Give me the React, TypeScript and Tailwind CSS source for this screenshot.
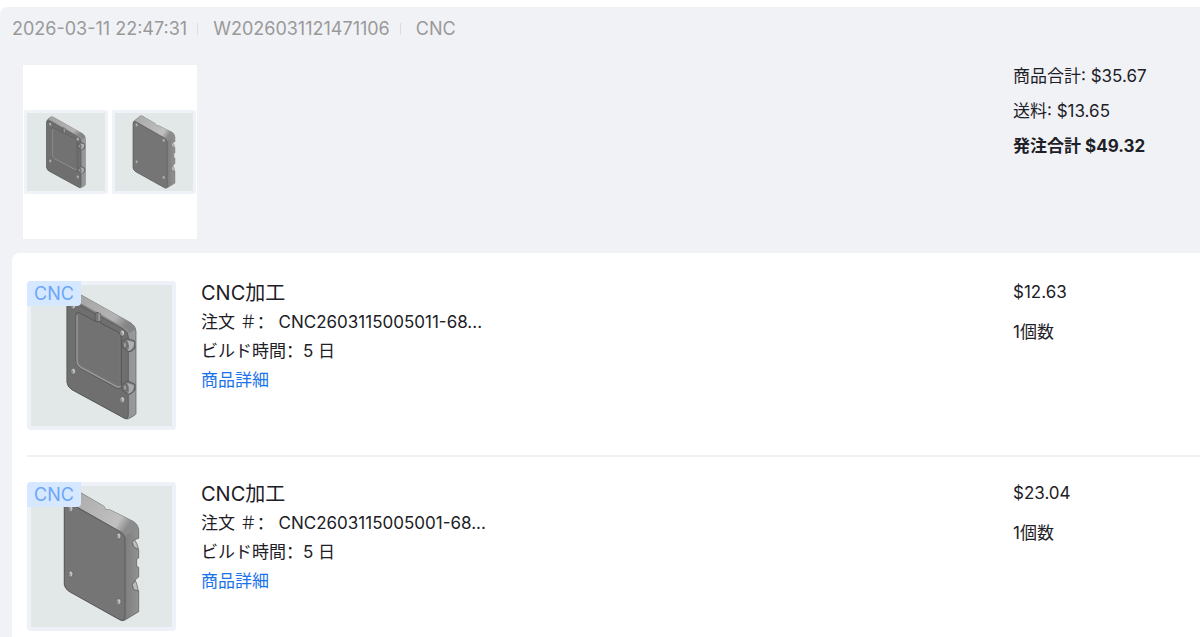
type Part = 'pocket' | 'cover';

type OrderItem = {
  id: string;
  part: Part;
  orderNumber: string;
  price: string;
};

const items: OrderItem[] = [
  { id: 'a', part: 'pocket', orderNumber: 'CNC2603115005011-68...', price: '$12.63' },
  { id: 'b', part: 'cover', orderNumber: 'CNC2603115005001-68...', price: '$23.04' },
];

function Hole({ x, y }: { x: number; y: number }) {
  return (
    <g>
      <ellipse cx={x} cy={y} rx="7" ry="9" fill="#c4c4c4" stroke="#555" strokeWidth="2" />
      <path d={`M${x - 5} ${y - 6}Q${x + 1} ${y - 2} ${x + 1} ${y + 8}Q${x - 8} ${y + 4} ${x - 5} ${y - 6}Z`} fill="#8a8a8a" />
    </g>
  );
}

function PocketPlate({ className }: { className: string }) {
  return (
    <svg viewBox="21 30 447 447" className={className} role="img" aria-label="CNC部品 1">
      <defs>
        <linearGradient id="pocketSide" x1="0" y1="0" x2="1" y2="0">
          <stop offset="0" stopColor="#6c6c6c" />
          <stop offset="1" stopColor="#9a9a9a" />
        </linearGradient>
        <linearGradient id="pocketTop" x1="0" y1="0" x2="1" y2="0.5">
          <stop offset="0" stopColor="#a2a2a2" />
          <stop offset="0.8" stopColor="#b4b4b4" />
          <stop offset="1" stopColor="#858585" />
        </linearGradient>
      </defs>
      <path d="M141 91Q143 82 151 77L163 67Q169 63 178 69L333 156Q347 165 348 180V427Q347 431 342 434L326 443Q319 446 312 441L156 356Q142 347 141 334Z" fill="url(#pocketSide)" stroke="#5a5a5a" strokeWidth="2" />
      <path d="M146 88L163 67Q169 63 178 69L333 156Q345 164 347 176L327 187Q325 176 314 170L163 86Q152 80 146 88Z" fill="url(#pocketTop)" />
      <path d="M141 101Q141 83 156 91L311 174Q325 183 325 198V431Q324 447 312 441L156 356Q142 347 141 334Z" fill="#6f6f6f" stroke="#505050" strokeWidth="2" />
      <path d="M168 134Q168 119 181 127L226 151Q233 154 240 150L244 158L288 180Q304 188 304 205V342Q303 359 288 350L184 293Q168 283 168 268Z" fill="#747474" stroke="#484848" strokeWidth="2" />
      <path d="M171 132V268Q171 282 184 290L290 347Q299 351 302 344" fill="none" stroke="#9c9c9c" strokeWidth="4" />
      <path d="M178 136V266Q178 275 190 283L297 340V207Q297 192 284 185L192 137Q180 130 178 136Z" fill="#727272" />
      <path d="M225 128Q228 122 235 125L242 129V151Q233 156 225 149Z" fill="#777" stroke="#4c4c4c" strokeWidth="2" />
      <path d="M235 126L241 130V149L235 151Z" fill="#9c9c9c" />
      <path d="M304 212L323 203Q331 204 344 210L345 232Q334 245 324 242L306 228Z" fill="#777" stroke="#4c4c4c" strokeWidth="2" />
      <path d="M321 208L342 213Q343 230 331 238L322 240Q333 228 321 208Z" fill="#b0b0b0" />
      <ellipse cx="315" cy="222" rx="6" ry="9" fill="#999" stroke="#4c4c4c" strokeWidth="2" />
      <path d="M304 342L323 331Q334 332 345 340V357Q334 372 324 370L306 358Z" fill="#777" stroke="#4c4c4c" strokeWidth="2" />
      <path d="M321 335L342 343Q342 358 331 366L322 369Q333 357 321 335Z" fill="#aaa" />
      <ellipse cx="315" cy="350" rx="6" ry="9" fill="#999" stroke="#4c4c4c" strokeWidth="2" />
      <Hole x={160} y={105} />
      <Hole x={307} y={186} />
      <Hole x={160} y={301} />
      <Hole x={307} y={386} />
    </svg>
  );
}

function CoverPlate({ className }: { className: string }) {
  return (
    <svg viewBox="21 35 447 447" className={className} role="img" aria-label="CNC部品 2">
      <defs>
        <linearGradient id="coverSide" x1="0" y1="0" x2="1" y2="0">
          <stop offset="0" stopColor="#686868" />
          <stop offset="0.8" stopColor="#7c7c7c" />
          <stop offset="1" stopColor="#929292" />
        </linearGradient>
        <linearGradient id="coverTop" x1="0" y1="0" x2="1" y2="0.4">
          <stop offset="0" stopColor="#a8a8a8" />
          <stop offset="0.85" stopColor="#c0c0c0" />
          <stop offset="1" stopColor="#8c8c8c" />
        </linearGradient>
      </defs>
      <path d="M133 105Q134 95 143 90L174 65L182 67L252 108L257 118L271 119L341 154Q355 163 356 180V204L343 208L337 216L340 229L356 240V263L350 267V288L356 291V320L344 330L337 343L341 358L356 362V424L315 449Q308 454 299 448L147 363Q134 354 133 342Z" fill="url(#coverSide)" stroke="#555" strokeWidth="2" />
      <path d="M140 93L174 65L182 67L252 108L257 118L271 119L341 154Q352 161 355 174L315 198Q314 190 304 184L151 97Q144 94 140 93Z" fill="url(#coverTop)" />
      <path d="M343 207Q352 218 356 238L341 229L337 216Z" fill="#bcbcbc" stroke="#555" strokeWidth="2" />
      <path d="M346 330Q352 344 355 361L341 358L337 343Z" fill="#bcbcbc" stroke="#555" strokeWidth="2" />
      <path d="M133 111Q133 91 149 99L300 184Q315 193 315 209V439Q314 455 299 448L147 363Q134 354 133 342Z" fill="#757575" stroke="#505050" strokeWidth="2" />
      <Hole x={152} y={115} />
      <Hole x={296} y={197} />
      <Hole x={152} y={311} />
      <Hole x={296} y={394} />
    </svg>
  );
}

function PartPicture({ part, size }: { part: Part; size: 'small' | 'large' }) {
  const frame =
    size === 'large'
      ? 'size-[149px] rounded border-4 border-[#eef1f7] bg-[#e2e7e7]'
      : 'size-[84px] rounded-xs border-3 border-[#eff2f7] bg-[#e2e7e7]';
  const drawing = size === 'large' ? 'size-[149px] -m-1' : 'size-[84px] -m-[3px]';
  return (
    <div className={frame}>
      <div className={drawing}>
        {part === 'pocket' ? <PocketPlate className="size-full" /> : <CoverPlate className="size-full" />}
      </div>
    </div>
  );
}

function Wide({ children }: { children: string }) {
  return (
    <span lang="zh-CN" className="font-['Noto_Sans_CJK_SC',sans-serif] leading-none">
      {children}
    </span>
  );
}

function ItemRow({ item }: { item: OrderItem }) {
  return (
    <li className="flex border-b-2 border-[#f0f1f4] pt-[25px] pb-[25px]">
      <div className="relative shrink-0">
        <PartPicture part={item.part} size="large" />
        <span className="absolute top-0 left-0 rounded-tl rounded-br bg-[#d5e8ff] px-[7px] text-lg leading-[25px] text-[#6ca6f8]">
          CNC
        </span>
      </div>
      <div className="min-w-0 flex-1 pl-[25px]">
        <h2 className="mb-[3px] text-xl leading-6">CNC加工</h2>
        <p className="leading-[29px]">
          注文 <Wide>＃：</Wide>&nbsp;{item.orderNumber}
        </p>
        <p className="leading-[29px]">
          ビルド時間<Wide>：</Wide>5 日
        </p>
        <a href="#detail" className="block leading-[29px] text-[#1a73e8]">
          商品詳細
        </a>
      </div>
      <div className="w-[187px] shrink-0">
        <p className="leading-[22px]">{item.price}</p>
        <p className="mt-[18px] leading-[22px]">1個数</p>
      </div>
    </li>
  );
}

export default function App() {
  return (
    <div className="h-screen overflow-hidden bg-white pt-[7px] font-['Inter','Noto_Sans_CJK_JP',sans-serif] text-[17px] text-[#1d2026]">
      <main className="min-h-full rounded-tl-lg bg-[#f1f2f6]" lang="ja">
        <header className="flex items-center pt-2 pl-3 text-lg leading-7 text-[#999]">
          <time>2026-03-11 22:47:31</time>
          <span className="mr-[15px] ml-[10px] h-3 w-px bg-[#dcdde1]" />
          <span>W2026031121471106</span>
          <span className="mr-[15px] ml-[10px] h-3 w-px bg-[#dcdde1]" />
          <span>CNC</span>
        </header>
        <section className="flex items-start justify-between pt-[22px] pl-[23px]">
          <div className="flex h-[174px] w-[174px] items-center justify-center gap-1 bg-white">
            <PartPicture part="pocket" size="small" />
            <PartPicture part="cover" size="small" />
          </div>
          <div className="-mt-[6px] w-[187px] leading-[35px]">
            <p>商品合計: $35.67</p>
            <p>送料: $13.65</p>
            <p className="font-bold">発注合計 $49.32</p>
          </div>
        </section>
        <ul className="mt-[14px] ml-3 rounded-tl-lg bg-white pt-[3px] pl-[15px]">
          {items.map((item) => (
            <ItemRow key={item.id} item={item} />
          ))}
        </ul>
      </main>
    </div>
  );
}
